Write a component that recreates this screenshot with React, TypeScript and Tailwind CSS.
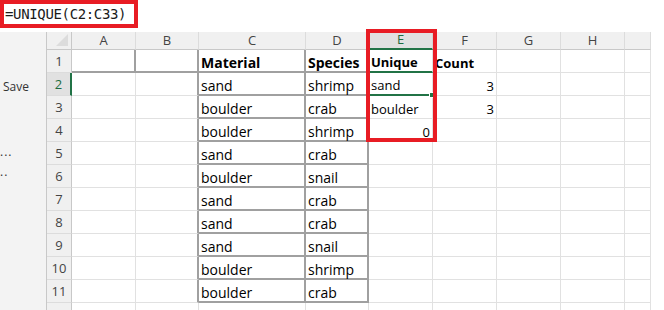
import React from "react";

type CellSpec = { text?: string; bold?: boolean; right?: boolean; small?: boolean };

const tableRows: [string, string][] = [
  ["sand", "shrimp"],
  ["boulder", "crab"],
  ["boulder", "shrimp"],
  ["sand", "crab"],
  ["boulder", "snail"],
  ["sand", "crab"],
  ["sand", "crab"],
  ["sand", "snail"],
  ["boulder", "shrimp"],
  ["boulder", "crab"],
];

function spec(r: number, c: number): CellSpec {
  // r: 1-based row number, c: 0 = A ... 8 = I
  if (r === 1) {
    if (c === 2) return { text: "Material", bold: true };
    if (c === 3) return { text: "Species", bold: true };
    if (c === 4) return { text: "Unique", bold: true, small: true };
    if (c === 5) return { text: "Count", bold: true, small: true };
    return {};
  }
  if (r >= 2 && r <= 11) {
    if (c === 2) return { text: tableRows[r - 2][0] };
    if (c === 3) return { text: tableRows[r - 2][1] };
  }
  if (c === 4) {
    if (r === 2) return { text: "sand", small: true };
    if (r === 3) return { text: "boulder", small: true };
    if (r === 4) return { text: "0", small: true, right: true };
  }
  if (c === 5 && (r === 2 || r === 3)) return { text: "3", small: true, right: true };
  return {};
}

function borderClasses(r: number, c: number): string {
  const thickRight =
    (r === 1 && c <= 3) || (r >= 2 && r <= 11 && (c === 1 || c === 2 || c === 3));
  const thickBottom = (r === 1 && c <= 3) || (r >= 2 && r <= 11 && (c === 2 || c === 3));
  const greenBottom = c === 4 && (r === 1 || r === 2);
  const blueBottom = c === 4 && r === 4;
  const right = thickRight ? "border-r-2 border-r-[#a0a0a0]" : "border-r border-r-[#e1e1e1]";
  let bottom = "border-b border-b-[#e1e1e1]";
  if (thickBottom) bottom = "border-b-2 border-b-[#a0a0a0]";
  if (greenBottom) bottom = "border-b-2 border-b-[#217346]";
  if (blueBottom) bottom = "border-b border-b-[#4f7fd1]";
  return right + " " + bottom;
}

const colLetters = ["A", "B", "C", "D", "E", "F", "G", "H", ""];

export default function App() {
  const rowNums = Array.from({ length: 12 }, (_, i) => i + 1);
  return (
    <div className="relative w-[664px] h-[310px] overflow-hidden bg-white font-['Open_Sans',sans-serif] text-black">
      {/* formula bar annotation */}
      <div className="h-[32px]">
        <div className="w-[138px] h-[28px] border-4 border-[#e81c24] flex items-center pl-[1px]">
          <span className="font-['DejaVu_Sans_Mono',monospace] text-[14px] tracking-[-0.35px] leading-none text-[#1a1a1a]">
            =UNIQUE(C2:C33)
          </span>
        </div>
      </div>

      <div className="flex">
        {/* left side panel */}
        <div className="w-[47px] h-[278px] bg-[#f3f3f3] border-r border-r-[#c8c8c8] flex flex-col text-[12px] text-[#333] leading-none">
          <div className="mt-[49px] pl-[3px]">Save</div>
          <div className="mt-[53px] pl-0 tracking-[1px]">...</div>
          <div className="mt-[8px] pl-0 tracking-[1px]">..</div>
        </div>

        {/* sheet grid */}
        <div className="grid grid-cols-[25px_64px_63px_107px_63px_64px_64px_64px_64px_26px] grid-rows-[18px_repeat(12,23px)]">
          {/* header row */}
          <div className="relative bg-[#f0f0f0] border-r border-r-[#c8c8c8] border-b border-b-[#c8c8c8]">
            <div className="absolute right-[3px] bottom-[3px] w-0 h-0 border-l-[12px] border-l-transparent border-b-[12px] border-b-[#dcdcdc]" />
          </div>
          {colLetters.map((l, i) => (
            <div
              key={"h" + i}
              className={
                i === 4
                  ? "flex items-center justify-center bg-[#e1e1e1] border-r border-r-[#d4d4d4] border-b-2 border-b-[#217346] text-[13px] text-[#1d6b40]"
                  : "flex items-center justify-center bg-[#f0f0f0] border-r border-r-[#dcdcdc] border-b border-b-[#c8c8c8] text-[13px] text-[#444]"
              }
            >
              {l}
            </div>
          ))}

          {rowNums.map((r) => (
            <React.Fragment key={"r" + r}>
              <div
                className={
                  r === 2
                    ? "flex items-center justify-center pt-[2px] bg-[#e1e1e1] border-r-2 border-r-[#217346] border-b border-b-[#dcdcdc] text-[13px] text-[#1d6b40]"
                    : "flex items-center justify-center pt-[2px] bg-[#f0f0f0] border-r border-r-[#c8c8c8] border-b border-b-[#dcdcdc] text-[13px] text-[#444]"
                }
              >
                {r <= 11 ? r : ""}
              </div>
              {colLetters.map((_, c) => {
                const s = spec(r, c);
                const isSel = r === 2 && c === 4;
                return (
                  <div
                    key={"c" + r + "-" + c}
                    className={
                      "relative flex items-end whitespace-nowrap overflow-visible " +
                      borderClasses(r, c) +
                      (s.right ? " justify-end pr-[2px]" : " pl-[2px]") +
                      (s.small ? " text-[13px] leading-[17px]" : " text-[14px] leading-[17px]") +
                      (s.bold ? " font-bold" : "") +
                      (c === 5 && r === 1 ? " z-10" : "")
                    }
                  >
                    {s.text}
                    {isSel && (
                      <div className="absolute -right-[3px] -bottom-[4px] w-[6px] h-[6px] bg-[#217346] border border-white z-10" />
                    )}
                  </div>
                );
              })}
            </React.Fragment>
          ))}
        </div>
      </div>

      {/* red annotation box around column E */}
      <div className="absolute left-[366px] top-[29px] w-[71px] h-[113px] border-4 border-[#e81c24] z-20 pointer-events-none" />
    </div>
  );
}
